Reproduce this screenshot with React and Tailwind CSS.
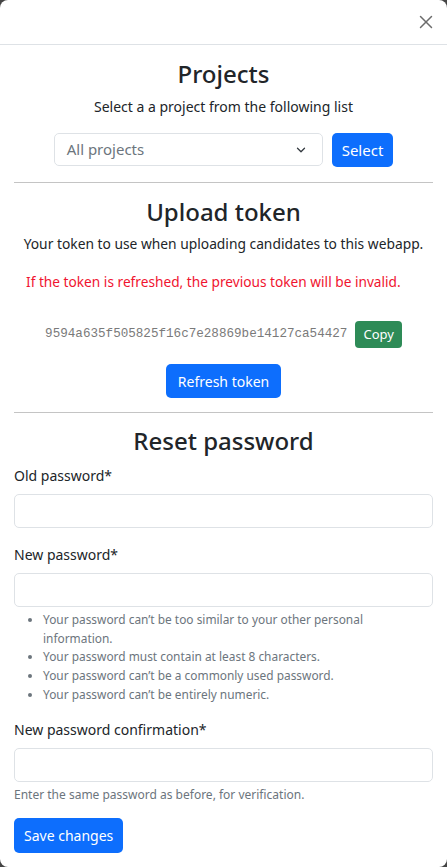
import { X, ChevronDown } from 'lucide-react'

const RULES = [
  'Your password can’t be too similar to your other personal information.',
  'Your password must contain at least 8 characters.',
  'Your password can’t be a commonly used password.',
  'Your password can’t be entirely numeric.',
]

function Field({ label, children }) {
  return (
    <div>
      <label className="block text-[14px] leading-[22px] font-normal text-[#212529] mb-[7px]">{label}</label>
      <input type="password" className="w-full h-[34px] rounded-[5px] border border-[#dee2e6] bg-white" />
      {children}
    </div>
  )
}

export default function App() {
  return (
    <div className="min-h-screen bg-[#454545] font-['Noto_Sans',sans-serif]">
      <div className="bg-white rounded-[8px] min-h-[867px] overflow-hidden">
        <div className="h-[45px] border-b border-[#dee2e6] flex items-center justify-end pr-[10px]">
          <X className="w-[22px] h-[22px] text-[#6c6c6c]" strokeWidth={1.6} />
        </div>

        <div className="px-[14px] pt-[14px] pb-[14px]">
          <div className="flex flex-col items-center">
            <h3 className="text-[24px] leading-[30px] font-medium text-[#212529]">Projects</h3>
            <p className="text-[14px] mt-[7px] text-[#212529]">Select a a project from the following list</p>
            <div className="flex gap-[9px] mt-[16px]">
              <div className="w-[269px] h-[33px] rounded-[5px] border border-[#dee2e6] flex items-center justify-between pl-[12px] pr-[14px] text-[15px] text-[#6c757d]">
                <span>All projects</span>
                <ChevronDown className="w-[14px] h-[14px] text-[#343a40]" strokeWidth={2.2} />
              </div>
              <button className="h-[34px] px-[10px] rounded-[5px] bg-[#0d6efd] text-white text-[15px]">Select</button>
            </div>
          </div>

          <hr className="mt-[15px] border-[#c4c4c4]" />

          <div className="flex flex-col items-center">
            <h3 className="text-[24px] leading-[32px] font-medium mt-[13px] text-[#212529]">Upload token</h3>
            <p className="text-[13.8px] mt-[6px] text-[#212529]">Your token to use when uploading candidates to this webapp.</p>
            <p className="text-[13.7px] mt-[17px] text-[#f0142f] self-start pl-[12px]">If the token is refreshed, the previous token will be invalid.</p>
            <div className="flex items-center gap-[8px] mt-[29px]">
              <span className="font-['Liberation_Mono',monospace] text-[12.6px] text-[#7a7a7a]">9594a635f505825f16c7e28869be14127ca54427</span>
              <button className="h-[27px] px-[8px] rounded-[4px] bg-[#2e8b57] text-white text-[13px]">Copy</button>
            </div>
            <button className="mt-[16px] h-[34px] px-[12px] rounded-[5px] bg-[#0d6efd] text-white text-[14px]">Refresh token</button>
          </div>

          <hr className="mt-[14px] border-[#c4c4c4]" />

          <div className="flex flex-col">
            <h3 className="text-center text-[24px] leading-[32px] font-medium mt-[12px] text-[#212529]">Reset password</h3>
            <div className="mt-[8px] flex flex-col gap-[16px]">
              <Field label="Old password*" />
              <Field label="New password*">
                <ul className="list-disc pl-[29px] mt-[3px] text-[11.9px] leading-[18.6px] text-[#6c757d]">
                  {RULES.map((r) => (
                    <li key={r}>{r}</li>
                  ))}
                </ul>
              </Field>
              <Field label="New password confirmation*">
                <p className="text-[12px] mt-[4px] text-[#6c757d]">Enter the same password as before, for verification.</p>
              </Field>
            </div>
            <div className="mt-[14px]">
              <button className="h-[35px] px-[10px] rounded-[5px] bg-[#0d6efd] text-white text-[14px]">Save changes</button>
            </div>
          </div>
        </div>
      </div>
    </div>
  )
}
